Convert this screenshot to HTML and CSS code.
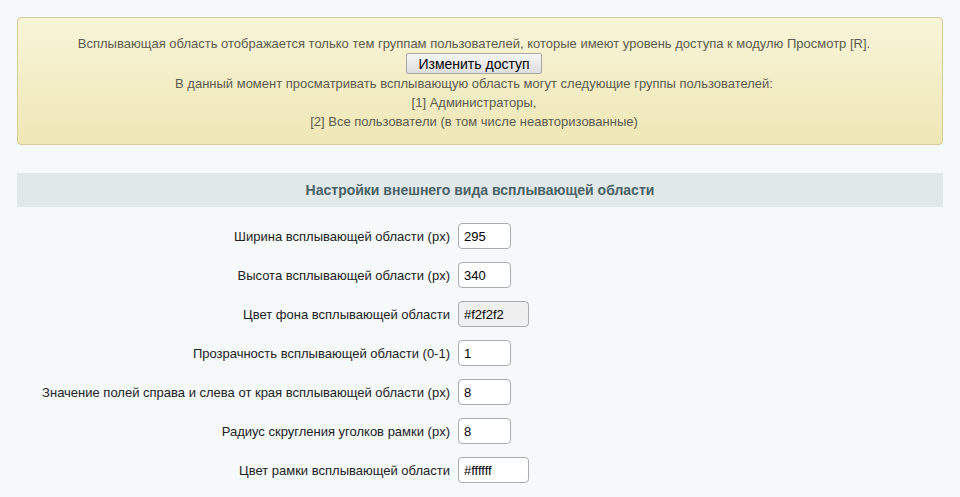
FILE: index.html
```html
<!DOCTYPE html>
<html lang="ru">
<head>
  <meta charset="UTF-8">
  <title>Настройки всплывающей области</title>
  <link rel="stylesheet" href="styles.css">
</head>
<body>
  <div class="page">
    <!-- Access notice -->
    <div class="notice">
      <div>Всплывающая область отображается только тем группам пользователей, которые имеют уровень доступа к модулю Просмотр [R].</div>
      <div><button class="btn" type="button">Изменить доступ</button></div>
      <div>В данный момент просматривать всплывающую область могут следующие группы пользователей:</div>
      <div>[1] Администраторы,</div>
      <div>[2] Все пользователи (в том числе неавторизованные)</div>
    </div>

    <!-- Appearance settings -->
    <div class="section-title">Настройки внешнего вида всплывающей области</div>
    <div class="form">
      <label class="label">Ширина всплывающей области (px)</label>
      <div><input class="field" type="text" value="295"></div>

      <label class="label">Высота всплывающей области (px)</label>
      <div><input class="field" type="text" value="340"></div>

      <label class="label">Цвет фона всплывающей области</label>
      <div><input class="field field-color field-disabled" type="text" value="#f2f2f2"></div>

      <label class="label">Прозрачность всплывающей области (0-1)</label>
      <div><input class="field" type="text" value="1"></div>

      <label class="label">Значение полей справа и слева от края всплывающей области (px)</label>
      <div><input class="field" type="text" value="8"></div>

      <label class="label">Радиус скругления уголков рамки (px)</label>
      <div><input class="field" type="text" value="8"></div>

      <label class="label">Цвет рамки всплывающей области</label>
      <div><input class="field field-color" type="text" value="#ffffff"></div>
    </div>
  </div>
</body>
</html>
```

FILE: styles.css
```css
body {
  margin: 0;
  padding: 0;
  background: #f5f9f9;
  font-family: "Liberation Sans", Arial, sans-serif;
  font-size: 13px;
  color: #000;
}
.page {
  padding: 17px 17px 0 17px;
}
/* Yellow notice box */
.notice {
  background: linear-gradient(to bottom, #f8f4d8, #efe7b6);
  border: 1px solid #d6cc9c;
  border-radius: 4px;
  padding: 16px 16px 13px 4px;
  text-align: center;
  color: #5b5b4e;
  line-height: 19px;
}
.btn {
  height: 21px;
  padding: 0 10px;
  font-family: "Liberation Sans", Arial, sans-serif;
  font-size: 14px;
  color: #000;
  background: linear-gradient(to bottom, #f7f7f7, #dedede);
  border: 1px solid #a9a9a9;
  border-radius: 2px;
  vertical-align: top;
  width: 136px;
}
/* Section header */
.section-title {
  margin-top: 28px;
  height: 34px;
  line-height: 34px;
  background: #e1e8ea;
  text-align: center;
  font-weight: bold;
  font-size: 14px;
  color: #4b6267;
}
.form {
  display: grid;
  grid-template-columns: 433px 1fr;
  column-gap: 8px;
  row-gap: 13px;
  padding-top: 16px;
  align-items: center;
}
.label {
  text-align: right;
  color: #222;
}
.field {
  box-sizing: border-box;
  display: block;
  width: 53px;
  height: 26px;
  padding: 0 5px;
  font-family: "Liberation Sans", Arial, sans-serif;
  font-size: 13px;
  color: #000;
  background: #fff;
  border: 1px solid #a7adb0;
  border-radius: 4px;
}
.field-color {
  width: 71px;
}
.field-disabled {
  background: #f0f0f0;
}
```
